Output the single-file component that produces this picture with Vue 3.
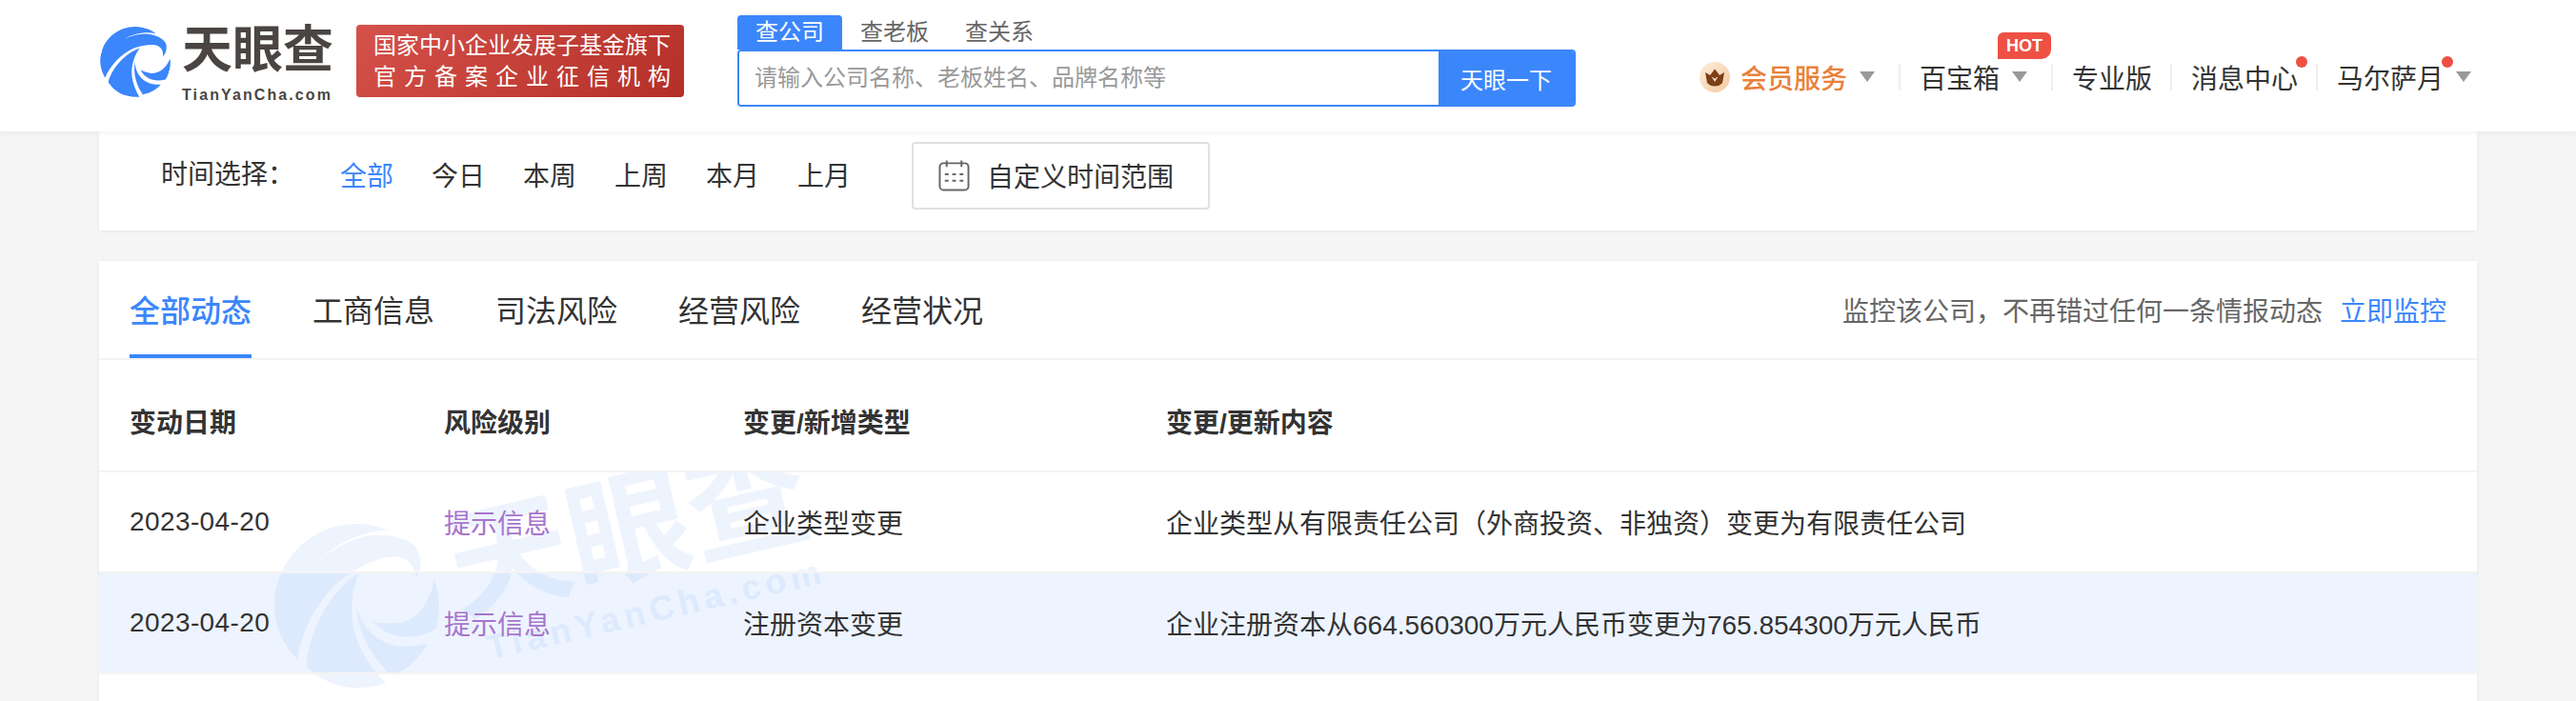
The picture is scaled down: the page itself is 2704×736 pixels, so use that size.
<script setup>
import { ref } from 'vue'

const ranges = ['全部', '今日', '本周', '上周', '本月', '上月']
const activeRange = ref('全部')

const tabs = ['全部动态', '工商信息', '司法风险', '经营风险', '经营状况']
const activeTab = ref('全部动态')

const rows = [
  { id: 1, date: '2023-04-20', level: '提示信息', type: '企业类型变更', content: '企业类型从有限责任公司（外商投资、非独资）变更为有限责任公司' },
  { id: 2, date: '2023-04-20', level: '提示信息', type: '注册资本变更', content: '企业注册资本从664.560300万元人民币变更为765.854300万元人民币' },
]
</script>

<template>
  <div class="page">
    <svg class="defs" width="0" height="0" aria-hidden="true">
      <symbol id="eye-mark" viewBox="25 15 517 517">
        <path fill="currentColor" d="M380 35C350 22 316 15 283 15C140 15 25 130 25 272C25 335 52 395 97 440C110 350 170 225 270 165C320 135 380 110 420 120C450 128 468 155 470 185C485 165 490 130 470 90C448 62 400 50 350 50C285 50 220 85 165 130C220 75 300 38 380 35Z" />
        <path fill="currentColor" d="M290 170C215 215 145 320 127 440L127 465C170 505 225 530 283 530C315 530 347 525 375 515C310 450 268 370 268 290C268 245 275 205 290 170Z" />
        <path fill="currentColor" d="M282 270C295 340 355 398 430 400C458 400 482 396 505 390C483 435 445 470 395 492C335 440 285 360 282 270Z" />
        <path fill="currentColor" d="M525 190C537 215 542 243 542 272C542 297 538 322 530 345C500 362 470 370 440 370C400 370 362 352 335 322C365 328 395 328 420 325C475 315 515 260 525 190Z" />
      </symbol>
    </svg>

    <header class="topbar">
      <div class="logo">
        <svg class="logo-mark"><use href="#eye-mark" /></svg>
        <div class="logo-text">
          <div class="logo-name">天眼查</div>
          <div class="logo-site">TianYanCha.com</div>
        </div>
      </div>

      <div class="slogan">
        <div>国家中小企业发展子基金旗下</div>
        <div class="slogan-wide">官方备案企业征信机构</div>
      </div>

      <div class="search">
        <div class="search-tabs">
          <span class="search-tab active">查公司</span>
          <span class="search-tab">查老板</span>
          <span class="search-tab">查关系</span>
        </div>
        <div class="search-box">
          <input class="search-input" placeholder="请输入公司名称、老板姓名、品牌名称等">
          <button class="search-btn">天眼一下</button>
        </div>
      </div>

      <nav class="nav">
        <div class="nav-item caret-item vip">
          <svg class="crown" viewBox="0 0 32 32">
            <defs>
              <linearGradient id="crown-bg" x1="0" y1="0" x2="1" y2="1">
                <stop offset="0" stop-color="#fdeedd" />
                <stop offset="1" stop-color="#f5c8a0" />
              </linearGradient>
            </defs>
            <circle cx="16" cy="16" r="16" fill="url(#crown-bg)" />
            <path d="M6 11L11 14L16 7.500L21 14L26 11L24 22C22 24.500 19 25.500 16 25.500C13 25.500 10 24.500 8 22Z" fill="#7b3f17" />
            <path d="M12.500 15.500L16 21L19.500 15.500L16 17.500Z" fill="#f8dcc0" />
          </svg>
          <span>会员服务</span>
          <i class="caret"></i>
        </div>
        <div class="nav-item caret-item">
          <span class="hot">HOT</span>
          <span>百宝箱</span>
          <i class="caret"></i>
        </div>
        <div class="nav-item">专业版</div>
        <div class="nav-item">
          <span class="dotted">消息中心<i class="dot"></i></span>
        </div>
        <div class="nav-item last">
          <span class="dotted">马尔萨月<i class="dot"></i></span>
          <i class="caret"></i>
        </div>
      </nav>
    </header>

    <section class="filter-card">
      <span class="filter-label">时间选择：</span>
      <div class="ranges">
        <span
          v-for="r in ranges"
          :key="r"
          :class="['range', { active: activeRange === r }]"
          @click="activeRange = r"
        >{{ r }}</span>
      </div>
      <button class="custom-range">
        <svg class="calendar" viewBox="0 0 34 34" fill="none" stroke="#666" stroke-width="2">
          <rect x="1.500" y="4" width="31" height="29" rx="4" />
          <path d="M9 1V8M25 1V8" />
          <path d="M7 16H11M15 16H19M23 16H27M7 23H11M15 23H19M23 23H27" />
        </svg>
        自定义时间范围
      </button>
    </section>

    <section class="news-card">
      <div class="tabs-bar">
        <div class="tabs">
          <span
            v-for="t in tabs"
            :key="t"
            :class="['tab', { active: activeTab === t }]"
            @click="activeTab = t"
          >{{ t }}</span>
        </div>
        <div class="monitor">
          监控该公司，不再错过任何一条情报动态<a class="monitor-link">立即监控</a>
        </div>
      </div>

      <div class="row head">
        <div>变动日期</div>
        <div>风险级别</div>
        <div>变更/新增类型</div>
        <div>变更/更新内容</div>
      </div>

      <div class="rows">
        <div class="watermark" aria-hidden="true">
          <svg class="wm-mark"><use href="#eye-mark" /></svg>
          <div class="wm-name">天眼查</div>
          <div class="wm-site">TianYanCha.com</div>
        </div>
        <div v-for="(row, i) in rows" :key="row.id" :class="['row', { hilite: i === 1 }]">
          <div class="date">{{ row.date }}</div>
          <div class="level">{{ row.level }}</div>
          <div>{{ row.type }}</div>
          <div>{{ row.content }}</div>
        </div>
      </div>
    </section>
  </div>
</template>

<style>
html, body {
  margin: 0;
  background: #f5f5f5;
}
</style>

<style scoped>
.page {
  height: 736px;
  overflow: hidden;
  font-family: "Liberation Sans", "Noto Sans CJK SC", sans-serif;
  font-size: 28px;
  color: #333;
  background: #f5f5f5;
}
.defs {
  position: absolute;
}

.topbar {
  position: relative;
  z-index: 2;
  height: 138px;
  box-sizing: border-box;
  padding: 16px 110px 0 105px;
  display: flex;
  align-items: flex-start;
  background: #fff;
  box-shadow: 0 2px 6px rgba(0, 0, 0, 0.05);
}
.logo {
  display: flex;
  gap: 12px;
  margin-top: 12px;
}
.logo-mark {
  width: 74px;
  height: 74px;
  color: #3b86fb;
  transform: rotate(14deg);
}
.logo-text {
  width: 159px;
}
.logo-name {
  height: 56px;
  margin-top: -3px;
  font-size: 53px;
  line-height: 56px;
  font-weight: 700;
  color: #4a4543;
  white-space: nowrap;
}
.logo-site {
  margin-top: 10px;
  font-size: 16px;
  line-height: 18px;
  font-weight: 700;
  letter-spacing: 2.100px;
  color: #4a4543;
  white-space: nowrap;
}
.slogan {
  width: 344px;
  height: 76px;
  margin: 10px 0 0 24px;
  box-sizing: border-box;
  padding: 5px 0 0 18px;
  border-radius: 4px;
  background: linear-gradient(135deg, #d5524b, #b32f27);
  color: #fff;
  font-size: 24px;
  line-height: 33px;
  white-space: nowrap;
}
.slogan-wide {
  letter-spacing: 8px;
}

.search {
  width: 880px;
  margin-left: 56px;
}
.search-tabs {
  display: flex;
}
.search-tab {
  width: 110px;
  height: 36px;
  font-size: 24px;
  line-height: 36px;
  text-align: center;
  color: #666;
}
.search-tab.active {
  background: #3b86fb;
  color: #fff;
  border-radius: 4px 4px 0 0;
}
.search-box {
  height: 60px;
  display: flex;
  box-sizing: border-box;
  border: 2px solid #3b86fb;
  border-radius: 4px;
  overflow: hidden;
}
.search-input {
  flex: 1;
  min-width: 0;
  border: none;
  outline: none;
  padding: 0 0 0 16px;
  font: 24px "Liberation Sans", "Noto Sans CJK SC", sans-serif;
  background: #fff;
}
.search-input::placeholder {
  color: #999;
}
.search-btn {
  width: 142px;
  border: none;
  padding: 0;
  background: #3b86fb;
  color: #fff;
  font: 24px "Liberation Sans", "Noto Sans CJK SC", sans-serif;
}

.nav {
  margin-left: auto;
  margin-top: 51px;
  display: flex;
  align-items: center;
}
.nav-item {
  position: relative;
  height: 28px;
  display: flex;
  align-items: center;
  padding: 0 19px 0 20px;
  border-left: 2px solid #eee;
  white-space: nowrap;
}
.nav-item.caret-item {
  padding-right: 25px;
}
.nav-item.vip {
  border-left: none;
  padding-left: 0;
  color: #e98139;
  font-weight: 500;
}
.nav-item.last {
  padding-right: 0;
}
.crown {
  width: 32px;
  height: 32px;
  margin-right: 11px;
}
.caret {
  width: 0;
  height: 0;
  margin-left: 13px;
  margin-top: -2px;
  border-left: 8px solid transparent;
  border-right: 8px solid transparent;
  border-top: 11px solid #999;
}
.hot {
  position: absolute;
  top: -33px;
  right: 0;
  width: 56px;
  height: 28px;
  border-radius: 6px 6px 10px 0;
  background: #ee5044;
  color: #fff;
  font-size: 18px;
  line-height: 28px;
  font-weight: 700;
  text-align: center;
}
.dotted {
  position: relative;
}
.dot {
  position: absolute;
  top: -2px;
  right: -10px;
  width: 12px;
  height: 12px;
  border-radius: 50%;
  background: #ee5044;
}

.filter-card {
  height: 104px;
  margin: 0 104px;
  box-sizing: border-box;
  padding: 11px 0 0 65px;
  display: flex;
  align-items: flex-start;
  background: #fff;
  box-shadow: 0 1px 4px rgba(0, 0, 0, 0.05);
}
.filter-label {
  width: 188px;
  line-height: 70px;
}
.ranges {
  display: flex;
  gap: 40px;
  margin-top: 2px;
  line-height: 70px;
}
.range {
  cursor: pointer;
}
.range.active {
  color: #3b86fb;
}
.custom-range {
  width: 313px;
  height: 71px;
  margin-left: 64px;
  box-sizing: border-box;
  display: flex;
  align-items: center;
  gap: 18px;
  padding: 0 0 2px 26px;
  border: 2px solid #e0e0e0;
  border-radius: 4px;
  background: #fff;
  color: #333;
  font: 28px "Liberation Sans", "Noto Sans CJK SC", sans-serif;
}
.calendar {
  width: 33px;
  height: 34px;
}

.news-card {
  margin: 32px 104px 0;
  background: #fff;
  box-shadow: 0 1px 4px rgba(0, 0, 0, 0.05);
}
.tabs-bar {
  height: 102px;
  padding: 0 32px;
  display: flex;
  justify-content: space-between;
  align-items: stretch;
  border-bottom: 2px solid #f3f3f3;
}
.tabs {
  display: flex;
  gap: 64px;
}
.tab {
  height: 98px;
  line-height: 106px;
  font-size: 32px;
  cursor: pointer;
}
.tab.active {
  color: #3b86fb;
  font-weight: 500;
  border-bottom: 4px solid #3b86fb;
  height: 94px;
  margin-top: 4px;
  line-height: 98px;
}
.monitor {
  color: #666;
  line-height: 107px;
  white-space: nowrap;
}
.monitor-link {
  margin-left: 18px;
  color: #3b86fb;
}

.row {
  position: relative;
  display: grid;
  grid-template-columns: 330px 314px 444px 1fr;
  align-items: center;
  height: 106px;
  box-sizing: border-box;
  padding: 0 32px;
  border-bottom: 2px solid #f3f3f3;
}
.row.head {
  height: 118px;
  padding-top: 12px;
  font-weight: 600;
}
.rows {
  position: relative;
  overflow: hidden;
  height: 240px;
}
.row.hilite {
  background: rgba(59, 134, 251, 0.09);
}
.date {
  letter-spacing: 0.400px;
}
.level {
  color: #a774cc;
}

.watermark {
  position: absolute;
  inset: 0;
  color: #eef4fe;
}
.wm-mark {
  position: absolute;
  left: 184px;
  top: 54px;
  width: 173px;
  height: 173px;
}
.wm-name {
  position: absolute;
  left: 364px;
  top: -4px;
  font-size: 128px;
  line-height: 130px;
  font-weight: 700;
  white-space: nowrap;
  transform: rotate(-13deg);
}
.wm-site {
  position: absolute;
  left: 403px;
  top: 122px;
  font-size: 36px;
  line-height: 44px;
  font-weight: 700;
  letter-spacing: 5.300px;
  white-space: nowrap;
  transform: rotate(-13deg);
}
</style>
